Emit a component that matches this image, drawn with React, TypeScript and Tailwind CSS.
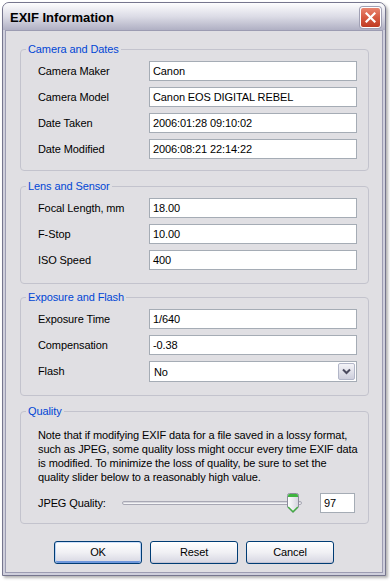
import React from "react";

const Row = ({ label, value }: { label: string; value: string }) => (
  <div className="flex items-center h-[20px]">
    <div className="w-[111px] shrink-0 whitespace-nowrap">{label}</div>
    <div className="w-[208px] h-[20px] bg-white border border-[#a5acb5] px-[3px] leading-[18px] whitespace-nowrap overflow-hidden">
      {value}
    </div>
  </div>
);

const Group = ({
  title,
  className,
  children,
}: {
  title: string;
  className: string;
  children: React.ReactNode;
}) => (
  <div
    className={`relative ml-[14px] w-[349px] border border-[#c3c3cd] rounded-[4px] pl-[17px] ${className}`}
  >
    <span className="absolute left-[5px] -top-[9px] px-[2px] bg-[#e0dfe3] text-[#0046d5] leading-[16px] whitespace-nowrap">
      {title}
    </span>
    {children}
  </div>
);

const Button = ({ label, def }: { label: string; def?: boolean }) => (
  <div
    className={`w-[88px] h-[23px] flex items-center justify-center rounded-[3px] border border-[#003c74] bg-gradient-to-b from-[#ffffff] via-[#f0f0f4] to-[#d6d6e2] ${
      def
        ? "shadow-[inset_1px_0_0_#b9d1f4,inset_-1px_0_0_#b9d1f4,inset_0_1px_0_#cee0fb,inset_0_-2px_0_#6e97dc]"
        : "shadow-[inset_0_-1px_0_#c4c4d4]"
    }`}
  >
    {label}
  </div>
);

export default function App() {
  return (
    <div className="w-[390px] h-[586px] bg-white overflow-hidden pt-[2px] pl-[2px] font-['Liberation_Sans',Arial,sans-serif] text-[11px] tracking-[-0.1px] text-black">
      <div className="w-[384px] rounded-t-[7px] border border-[#76768e] bg-[#cfcfdc] overflow-hidden shadow-[2px_2px_3px_rgba(0,0,0,0.3)]">
        {/* Title bar */}
        <div className="h-[27px] flex items-center justify-between pl-[7px] pr-[4px] pt-[1px] bg-gradient-to-b from-[#fdfdfe] via-[#dcdce6] to-[#b0b0c4]">
          <span className="text-[13px] font-bold tracking-normal leading-none text-black">
            EXIF Information
          </span>
          <div className="w-[21px] h-[21px] rounded-[3px] border border-white bg-gradient-to-b from-[#e9846f] via-[#d65a41] to-[#bf3a22] flex items-center justify-center shadow-[0_0_0_1px_#a0a0b4]">
            <svg width="11" height="11" viewBox="0 0 11 11">
              <path d="M1.5 1.5 L9.5 9.5 M9.5 1.5 L1.5 9.5" stroke="white" strokeWidth="2.2" strokeLinecap="square" />
            </svg>
          </div>
        </div>
        {/* Client area */}
        <div className="mx-[2px] mb-[2px] border border-[#9c9cb2] bg-[#e0dfe3] h-[543px] flex flex-col">
          <Group title="Camera and Dates" className="mt-[18px] pt-[11px] pb-[11px]">
            <div className="flex flex-col gap-[6px]">
              <Row label="Camera Maker" value="Canon" />
              <Row label="Camera Model" value="Canon EOS DIGITAL REBEL" />
              <Row label="Date Taken" value="2006:01:28 09:10:02" />
              <Row label="Date Modified" value="2006:08:21 22:14:22" />
            </div>
          </Group>
          <Group title="Lens and Sensor" className="mt-[15px] pt-[11px] pb-[13px]">
            <div className="flex flex-col gap-[6px]">
              <Row label="Focal Length, mm" value="18.00" />
              <Row label="F-Stop" value="10.00" />
              <Row label="ISO Speed" value="400" />
            </div>
          </Group>
          <Group title="Exposure and Flash" className="mt-[13px] pt-[11px] pb-[13px]">
            <div className="flex flex-col gap-[6px]">
              <Row label="Exposure Time" value="1/640" />
              <Row label="Compensation" value="-0.38" />
              <div className="flex items-center h-[21px]">
                <div className="w-[111px] shrink-0">Flash</div>
                <div className="w-[208px] h-[21px] bg-white border border-[#a5acb5] flex items-center justify-between pl-[4px] pr-[1px]">
                  <span className="leading-[18px]">No</span>
                  <div className="w-[17px] h-[17px] rounded-[2px] border border-[#b2b6c8] bg-gradient-to-b from-[#f4f4f8] to-[#cdcedc] flex items-center justify-center">
                    <svg width="9" height="7" viewBox="0 0 9 7">
                      <path d="M1 1.5 L4.5 5 L8 1.5" stroke="#4a4a5e" strokeWidth="2" fill="none" />
                    </svg>
                  </div>
                </div>
              </div>
            </div>
          </Group>
          <Group title="Quality" className="mt-[15px] pt-[16px] pb-[10px]">
            <div className="leading-[14px] whitespace-nowrap">
              <div>Note that if modifying EXIF data for a file saved in a lossy format,</div>
              <div>such as JPEG, some quality loss might occur every time EXIF data</div>
              <div>is modified. To minimize the loss of quality, be sure to set the</div>
              <div>quality slider below to a reasonably high value.</div>
            </div>
            <div className="mt-[9px] flex items-center h-[20px]">
              <div className="w-[84px] shrink-0">JPEG Quality:</div>
              <div className="relative w-[180px] h-[4px] rounded-full border border-[#a8a8b4] bg-[#f4f4f6] shadow-[inset_0_1px_0_#d8d8de]">
                <div className="absolute left-[164px] -top-[9px]">
                  <svg width="12" height="20" viewBox="0 0 12 20">
                    <defs>
                      <linearGradient id="tb" x1="0" x2="1" y1="0" y2="0">
                        <stop offset="0" stopColor="#ffffff" />
                        <stop offset="1" stopColor="#d4d4de" />
                      </linearGradient>
                    </defs>
                    <path d="M0.5 2.5 Q0.5 0.5 2.5 0.5 H9.5 Q11.5 0.5 11.5 2.5 V14 L6 19.5 L0.5 14 Z" fill="url(#tb)" stroke="#8c8c9c" />
                    <path d="M1 2.5 Q1 1 2.5 1 H9.5 Q11 1 11 2.5 V4 H1 Z" fill="#3fb43f" />
                    <path d="M1.2 14 L6 18.8 L10.8 14" stroke="#3fae3f" strokeWidth="1.3" fill="none" />
                  </svg>
                </div>
              </div>
              <div className="ml-[18px] w-[35px] h-[20px] bg-white border border-[#a5acb5] px-[3px] leading-[18px]">
                97
              </div>
            </div>
          </Group>
          <div className="mt-[17px] flex justify-center gap-[8px]">
            <Button label="OK" def />
            <Button label="Reset" />
            <Button label="Cancel" />
          </div>
        </div>
      </div>
    </div>
  );
}
